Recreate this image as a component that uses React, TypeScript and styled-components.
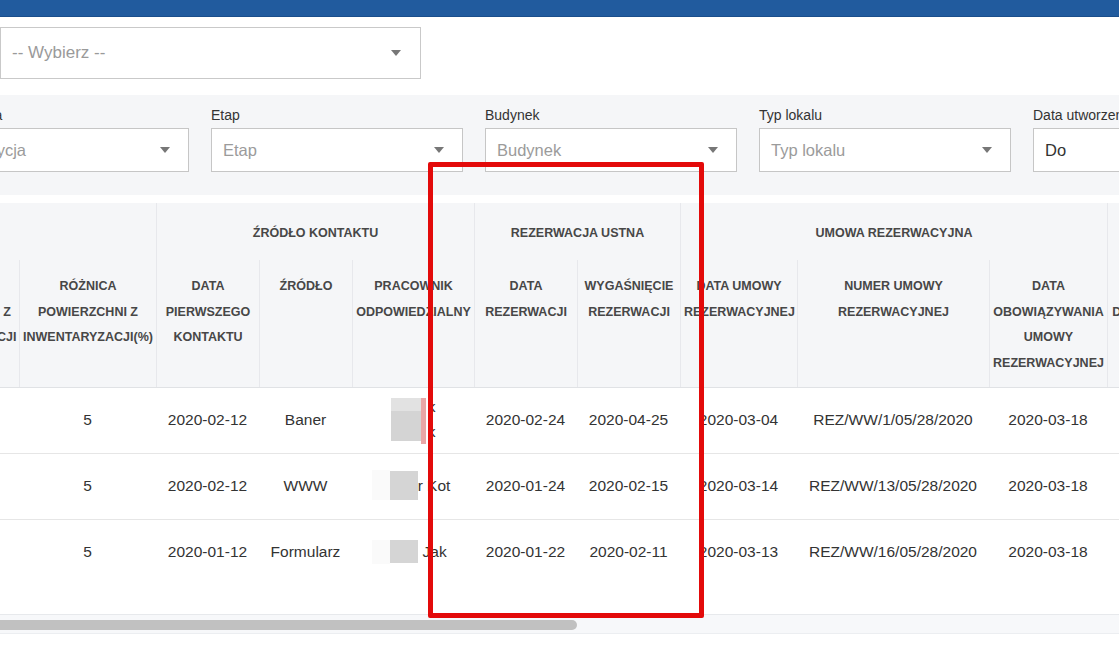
import React from "react";
import styled, { createGlobalStyle } from "styled-components";

const GlobalStyle = createGlobalStyle`
  html, body {
    margin: 0;
    padding: 0;
    background: #fff;
  }
  body {
    font-family: "Liberation Sans", Arial, sans-serif;
    color: #333;
    overflow: hidden;
  }
  * {
    box-sizing: border-box;
  }
`;

const COLS = "116px 137px 103px 93px 122px 103px 103px 117px 192px 118px 160px 140px";

const Page = styled.div`
  position: relative;
  width: 1119px;
  height: 650px;
  overflow: hidden;
`;

const TopBar = styled.div`
  height: 17px;
  background: #215b9e;
  border-bottom: 1px solid #1a4e8b;
`;

const Content = styled.div`
  padding-top: 10px;
`;

const MainSelect = styled.div`
  width: 421px;
  height: 52px;
  border: 1px solid #c9c9c9;
  background: #fff;
  display: flex;
  align-items: center;
  justify-content: space-between;
  padding: 0 19px 0 11px;
  font-size: 17px;
  color: #9a9a9a;
`;

const Caret = styled.span`
  width: 0;
  height: 0;
  border-left: 5px solid transparent;
  border-right: 5px solid transparent;
  border-top: 6px solid #777;
`;

const FilterPanel = styled.div`
  margin-top: 16px;
  height: 100px;
  background: #f5f6f8;
  padding-top: 12px;
  display: flex;
  gap: 22px;
`;

const Field = styled.div<{ $offset?: number }>`
  flex: none;
  width: 252px;
  margin-left: ${(p) => p.$offset ?? 0}px;
`;

const Label = styled.div`
  font-size: 14px;
  line-height: 17px;
  color: #333;
  margin-bottom: 4px;
  white-space: nowrap;
`;

const Input = styled.div<{ $filled?: boolean }>`
  height: 44px;
  border: 1px solid #c6c6c6;
  background: #fff;
  display: flex;
  align-items: center;
  justify-content: space-between;
  padding: 0 18px 0 11px;
  font-size: 16.5px;
  color: ${(p) => (p.$filled ? "#333" : "#9b9b9b")};
  white-space: nowrap;
`;

const TableArea = styled.div`
  margin-top: 8px;
`;

const Grid = styled.div`
  display: grid;
  grid-template-columns: ${COLS};
  width: 1504px;
  margin-left: -97px;
`;

const Head = styled(Grid)`
  background: #f5f6f8;
  border-bottom: 1px solid #e0e2e5;
  font-size: 12.5px;
  font-weight: bold;
  color: #474747;
  text-transform: uppercase;
`;

const GroupCell = styled.div<{ $span: number; $first?: boolean }>`
  grid-row: 1;
  grid-column: span ${(p) => p.$span};
  height: 57px;
  padding-top: 2px;
  display: flex;
  align-items: center;
  justify-content: center;
  border-left: ${(p) => (p.$first ? "none" : "1px solid #e7e8ec")};
`;

const SubCell = styled.div<{ $first?: boolean }>`
  grid-row: 2;
  padding: 14px 3px 11px;
  line-height: 25.5px;
  text-align: center;
  white-space: pre-line;
  border-left: ${(p) => (p.$first ? "none" : "1px solid #e7e8ec")};
`;

const Row = styled(Grid)<{ $last?: boolean }>`
  height: 66px;
  padding-bottom: 3px;
  border-bottom: ${(p) => (p.$last ? "none" : "1px solid #e6e6e6")};
`;

const Cell = styled.div`
  display: flex;
  align-items: center;
  justify-content: center;
  font-size: 15.5px;
  line-height: 25px;
  color: #333;
  white-space: nowrap;
`;

const Name = styled.div<{ $nudge?: number }>`
  display: flex;
  align-items: center;
  margin-right: ${(p) => p.$nudge ?? 0}px;
`;

const Blur = styled.span<{ $w: number; $h: number; $tone?: "faint" | "split" }>`
  display: block;
  flex: none;
  width: ${(p) => p.$w}px;
  height: ${(p) => p.$h}px;
  background: ${(p) =>
    p.$tone === "faint"
      ? "#fafafa"
      : p.$tone === "split"
      ? "linear-gradient(#e2e2e2 0 13px, #d4d4d4 13px)"
      : "#d5d5d5"};
`;

const PinkStrip = styled.span`
  display: block;
  flex: none;
  width: 5px;
  height: 46px;
  margin-top: 3px;
  background: #e9a6a6;
`;

const Lines = styled.div`
  display: flex;
  flex-direction: column;
  margin-left: 2px;
`;

const TableFoot = styled.div`
  height: 29px;
  border-bottom: 1px solid #e7e9ec;
`;

const ScrollTrack = styled.div`
  height: 19px;
  padding-top: 5px;
  background: #f7f8fa;
  border-bottom: 1px solid #eceef1;
`;

const ScrollThumb = styled.div`
  width: 587px;
  height: 10px;
  margin-left: -10px;
  border-radius: 5px;
  background: #c1c1c1;
`;

const Highlight = styled.div`
  position: absolute;
  left: 428px;
  top: 162px;
  width: 276px;
  height: 456px;
  border: 5px solid #e30a0a;
  border-radius: 2px;
  pointer-events: none;
`;

const groups = [
  { title: "", span: 2 },
  { title: "Źródło kontaktu", span: 3 },
  { title: "Rezerwacja ustna", span: 2 },
  { title: "Umowa rezerwacyjna", span: 3 },
  { title: "Umowa deweloperska", span: 2 },
];

const subHeaders = [
  "Stan powierzchni z inwentaryzacji",
  "Różnica powierzchni z inwentaryzacji(%)",
  "Data pierwszego kontaktu",
  "Źródło",
  "Pracownik odpowiedzialny",
  "Data rezerwacji",
  "Wygaśnięcie rezerwacji",
  "Data umowy rezerwacyjnej",
  "Numer umowy rezerwacyjnej",
  "Data obowiązywania umowy rezerwacyjnej",
  "Data\nDostarczenia umowy\nDeweloperskiej",
  "Data podpisania umowy deweloperskiej",
];

type RowData = {
  cells: string[];
  person: React.ReactNode;
};

const rows: RowData[] = [
  {
    cells: ["62,40", "5", "2020-02-12", "Baner", "", "2020-02-24", "2020-04-25", "2020-03-04", "REZ/WW/1/05/28/2020", "2020-03-18", "2020-03-25", "2020-04-02"],
    person: (
      <Name>
        <Blur $w={30} $h={43} $tone="split" />
        <PinkStrip />
        <Lines>
          <span>k</span>
          <span>k</span>
        </Lines>
      </Name>
    ),
  },
  {
    cells: ["58,10", "5", "2020-02-12", "WWW", "", "2020-01-24", "2020-02-15", "2020-03-14", "REZ/WW/13/05/28/2020", "2020-03-18", "2020-03-27", "2020-04-06"],
    person: (
      <Name $nudge={4}>
        <Blur $w={18} $h={30} $tone="faint" />
        <Blur $w={28} $h={29} />
        <span>r Kot</span>
      </Name>
    ),
  },
  {
    cells: ["71,25", "5", "2020-01-12", "Formularz", "", "2020-01-22", "2020-02-11", "2020-03-13", "REZ/WW/16/05/28/2020", "2020-03-18", "2020-03-26", "2020-04-03"],
    person: (
      <Name $nudge={7}>
        <Blur $w={18} $h={24} $tone="faint" />
        <Blur $w={28} $h={23} />
        <span>&nbsp;Jak</span>
      </Name>
    ),
  },
];

const filters = [
  { label: "Inwestycja", value: "Inwestycja", offset: -63, select: true },
  { label: "Etap", value: "Etap", select: true },
  { label: "Budynek", value: "Budynek", select: true },
  { label: "Typ lokalu", value: "Typ lokalu", select: true },
  { label: "Data utworzenia", value: "Do", filled: true },
];

function App() {
  return (
    <Page>
      <GlobalStyle />
      <TopBar />
      <Content>
        <MainSelect>
          <span>-- Wybierz --</span>
          <Caret />
        </MainSelect>

        <FilterPanel>
          {filters.map((f) => (
            <Field key={f.label} $offset={f.offset}>
              <Label>{f.label}</Label>
              <Input $filled={f.filled}>
                <span>{f.value}</span>
                {f.select && <Caret />}
              </Input>
            </Field>
          ))}
        </FilterPanel>

        <TableArea>
          <Head>
            {groups.map((g, i) => (
              <GroupCell key={i} $span={g.span} $first={i === 0}>
                {g.title}
              </GroupCell>
            ))}
            {subHeaders.map((h, i) => (
              <SubCell key={h} $first={i === 0}>
                {h}
              </SubCell>
            ))}
          </Head>

          {rows.map((r, ri) => (
            <Row key={ri} $last={ri === rows.length - 1}>
              {r.cells.map((c, ci) => (
                <Cell key={ci}>{ci === 4 ? r.person : c}</Cell>
              ))}
            </Row>
          ))}

          <TableFoot />
          <ScrollTrack>
            <ScrollThumb />
          </ScrollTrack>
        </TableArea>
      </Content>
      <Highlight />
    </Page>
  );
}

export default App;
